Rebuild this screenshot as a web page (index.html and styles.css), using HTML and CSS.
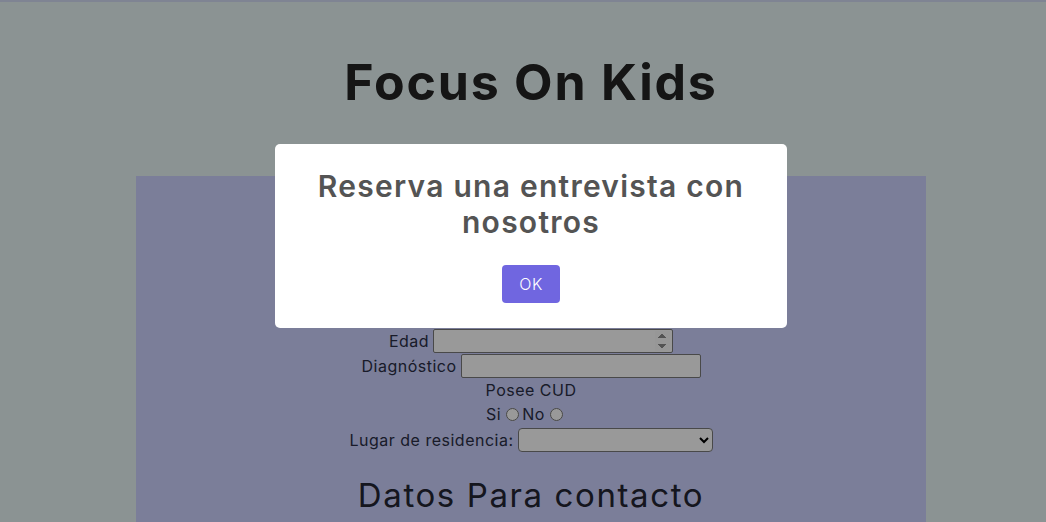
FILE: index.html
```html
<!DOCTYPE html>
<html lang="es">
<head>
<meta charset="utf-8">
<title>Focus On Kids</title>
<link rel="stylesheet" href="styles.css">
</head>
<body>
<div class="topbar"></div>
<div class="page">
  <header class="header">
    <h1 class="brand">Focus On Kids</h1>
  </header>
  <main class="panel">
    <h2 class="section-title">Datos del Niño</h2>
    <div class="row"><label class="lbl">Nombre</label><input class="field" type="text"></div>
    <div class="row"><label class="lbl">Apellido</label><input class="field" type="text"></div>
    <div class="row"><label class="lbl">DNI</label><input class="field" type="text"></div>
    <div class="row"><label class="lbl">Edad</label><input class="field" type="number"></div>
    <div class="row"><label class="lbl">Diagnóstico</label><input class="field" type="text"></div>
    <div class="row text-row">Posee CUD</div>
    <div class="row text-row radios">Si <input type="radio" name="cud" class="radio"> No <input type="radio" name="cud" class="radio"></div>
    <div class="row sel-row"><label class="lbl">Lugar de residencia:</label><select class="select"><option></option></select></div>
    <h2 class="section-title contact">Datos Para contacto</h2>
  </main>
</div>
<div class="overlay">
  <div class="popup">
    <h2 class="popup-title">Reserva una entrevista con nosotros</h2>
    <div class="actions"><button class="ok-btn">OK</button></div>
  </div>
</div>
</body>
</html>
```
FILE: styles.css
```css
* { box-sizing: border-box; }
html, body { margin: 0; padding: 0; }
body {
  background: #e8f5f5;
  font-family: Inter, "Open Sans", sans-serif;
  color: #2b2e45;
  height: 522px;
  overflow: hidden;
}
.topbar { height: 2px; background: #d4dcf6; }
.page { padding-left: 16px; }
.header { padding-top: 50px; text-align: center; }
.brand {
  margin: 0;
  font-size: 50px;
  line-height: 60px;
  font-weight: 700;
  color: #232323;
  letter-spacing: 1.8px;
}
.panel {
  width: 790px;
  margin: 64px auto 0;
  background: #cdd3ff;
  padding-top: 24px;
  height: 400px;
}
.section-title {
  margin: 0 0 13px;
  text-align: center;
  font-size: 32px;
  line-height: 40px;
  font-weight: 400;
  color: #232533;
  letter-spacing: 1.6px;
}
.section-title.contact { margin-top: 22px; font-size: 33px; }
.row {
  height: 25px;
  display: flex;
  justify-content: center;
  align-items: center;
  gap: 4px;
  font-size: 16px;
  letter-spacing: 0.5px;
}
.lbl { font-size: 16px; }
.field {
  width: 240px;
  height: 24px;
  border: 1px solid #7a7a7a;
  border-radius: 2px;
  background: #fff;
  font: inherit;
}
.field[type=number]::-webkit-inner-spin-button { opacity: 1; }
.text-row { height: 24px; gap: 0; }
.radios { gap: 0; padding-right: 10px; }
.radio { width: 13px; height: 13px; margin: 1px 3px 0 5px; }
.sel-row { height: 26px; margin-top: 1px; }
.select {
  width: 195px;
  height: 24px;
  border: 1px solid #7a7a7a;
  border-radius: 4px;
  background: #fff;
}
.overlay {
  position: fixed;
  inset: 0;
  background: rgba(0,0,0,0.4);
  display: flex;
  justify-content: center;
  align-items: flex-start;
  padding: 144px 0 0 16px;
}
.popup {
  width: 512px;
  background: #fff;
  border-radius: 5px;
  padding: 0 0 20px;
  text-align: center;
}
.popup-title {
  margin: 0;
  padding: 24px 20px 0;
  font-size: 30px;
  line-height: 36px;
  font-weight: 600;
  color: #545454;
  letter-spacing: 1.25px;
}
.actions { margin-top: 20px; }
.ok-btn {
  margin: 5px;
  border: 0;
  border-radius: 4px;
  background: #7066e0;
  color: #fff;
  font-family: inherit;
  font-size: 16px;
  font-weight: 300;
  letter-spacing: 0.5px;
  height: 38px;
  padding: 0 17.6px;
}
```
